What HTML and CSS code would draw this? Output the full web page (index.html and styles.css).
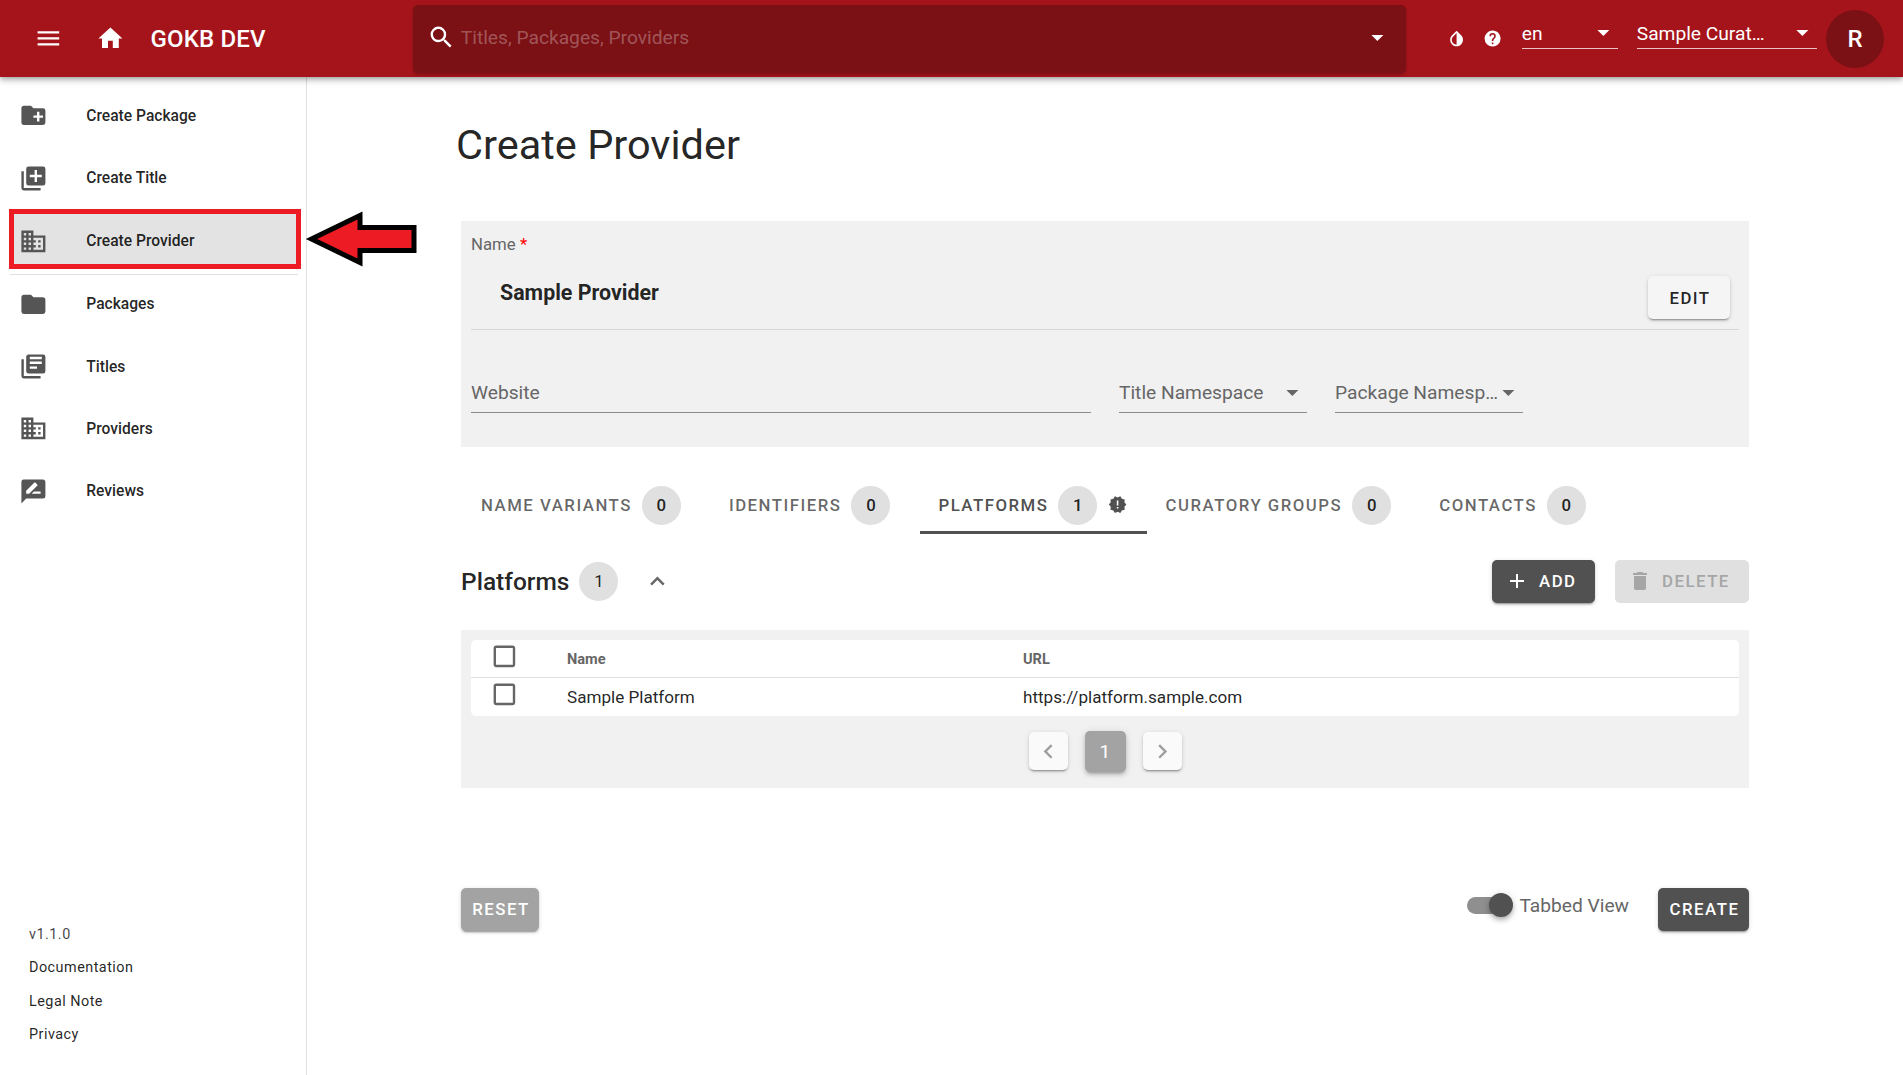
FILE: index.html
```html
<!DOCTYPE html>
<html lang="en">
<head>
<meta charset="utf-8">
<title>Create Provider</title>
<link rel="stylesheet" href="styles.css">
</head>
<body>
<div class="app">
  <header class="topbar">
    <div class="brand">
      <svg class="icon icon-menu" viewBox="0 0 24 24"><path d="M3,6H21V8H3V6M3,11H21V13H3V11M3,16H21V18H3V16Z"/></svg>
      <svg class="icon icon-home" viewBox="0 0 24 24"><path d="M10,20V14H14V20H19V12H22L12,3L2,12H5V20H10Z"/></svg>
      <span class="brand-title">GOKB DEV</span>
    </div>
    <div class="search">
      <svg class="icon" viewBox="0 0 24 24"><path d="M9.5,3A6.5,6.5 0 0,1 16,9.5C16,11.11 15.41,12.59 14.44,13.73L14.71,14H15.5L20.5,19L19,20.5L14,15.5V14.71L13.73,14.44C12.59,15.41 11.11,16 9.5,16A6.5,6.5 0 0,1 3,9.5A6.5,6.5 0 0,1 9.5,3M9.5,5C7,5 5,7 5,9.5C5,12 7,14 9.5,14C12,14 14,12 14,9.5C14,7 12,5 9.5,5Z"/></svg>
      <span class="search-text">Titles, Packages, Providers</span>
      <svg class="icon" viewBox="0 0 24 24"><path d="M7,10L12,15L17,10H7Z"/></svg>
    </div>
    <div class="tools">
      <svg class="icon-small icon-drop" viewBox="0 0 24 24"><path d="M12,19.58V19.58C10.4,19.58 8.89,18.96 7.76,17.83C6.62,16.69 6,15.19 6,13.58C6,12 6.62,10.47 7.76,9.34L12,5.1M17.66,7.93L12,2.27V2.27L6.34,7.93C3.22,11.05 3.22,16.12 6.34,19.24C7.9,20.8 9.95,21.58 12,21.58C14.05,21.58 16.1,20.8 17.66,19.24C20.78,16.12 20.78,11.05 17.66,7.93Z"/></svg>
      <svg class="icon-small icon-help" viewBox="0 0 24 24"><path d="M15.07,11.25L14.17,12.17C13.45,12.89 13,13.5 13,15H11V14.5C11,13.39 11.45,12.39 12.17,11.67L13.41,10.41C13.78,10.05 14,9.55 14,9C14,7.89 13.1,7 12,7A2,2 0 0,0 10,9H8A4,4 0 0,1 12,5A4,4 0 0,1 16,9C16,9.88 15.64,10.67 15.07,11.25M13,19H11V17H13M12,2A10,10 0 0,0 2,12A10,10 0 0,0 12,22A10,10 0 0,0 22,12C22,6.47 17.5,2 12,2Z"/></svg>
      <div class="top-select top-select-lang">
        <span>en</span>
        <svg class="icon" viewBox="0 0 24 24"><path d="M7,10L12,15L17,10H7Z"/></svg>
      </div>
      <div class="top-select top-select-group">
        <span>Sample Curat…</span>
        <svg class="icon" viewBox="0 0 24 24"><path d="M7,10L12,15L17,10H7Z"/></svg>
      </div>
      <div class="avatar">R</div>
    </div>
  </header>

  <div class="body-row">
    <aside class="sidebar">
      <nav class="nav">
        <a class="nav-item">
          <svg class="icon" viewBox="0 0 24 24"><path d="M10,4L12,6H20A2,2 0 0,1 22,8V18A2,2 0 0,1 20,20H4C2.89,20 2,19.1 2,18V6C2,4.89 2.89,4 4,4H10M15,9V12H12V14H15V17H17V14H20V12H17V9H15Z"/></svg>
          <span>Create Package</span>
        </a>
        <a class="nav-item">
          <svg class="icon" viewBox="0 0 24 24"><path d="M19,11H15V15H13V11H9V9H13V5H15V9H19M20,2H8A2,2 0 0,0 6,4V16A2,2 0 0,0 8,18H20A2,2 0 0,0 22,16V4A2,2 0 0,0 20,2M4,6H2V20A2,2 0 0,0 4,22H18V20H4V6Z"/></svg>
          <span>Create Title</span>
        </a>
        <a class="nav-item nav-item-active">
          <svg class="icon" viewBox="0 0 24 24"><path d="M18,15H16V17H18M18,11H16V13H18M20,19H12V17H14V15H12V13H14V11H12V9H20M10,7H8V5H10M10,11H8V9H10M10,15H8V13H10M10,19H8V17H10M6,7H4V5H6M6,11H4V9H6M6,15H4V13H6M6,19H4V17H6M12,7V3H2V21H22V7H12Z"/></svg>
          <span>Create Provider</span>
        </a>
        <div class="nav-divider"></div>
        <a class="nav-item">
          <svg class="icon" viewBox="0 0 24 24"><path d="M10,4H4C2.89,4 2,4.89 2,6V18A2,2 0 0,0 4,20H20A2,2 0 0,0 22,18V8C22,6.89 21.1,6 20,6H12L10,4Z"/></svg>
          <span>Packages</span>
        </a>
        <a class="nav-item">
          <svg class="icon" viewBox="0 0 24 24"><path d="M4,6H2V20A2,2 0 0,0 4,22H18V20H4V6M20,2H8A2,2 0 0,0 6,4V16A2,2 0 0,0 8,18H20A2,2 0 0,0 22,16V4A2,2 0 0,0 20,2M15,14H9V12H15V14M19,10H9V8H19V10M19,6H9V4H19V6Z"/></svg>
          <span>Titles</span>
        </a>
        <a class="nav-item">
          <svg class="icon" viewBox="0 0 24 24"><path d="M18,15H16V17H18M18,11H16V13H18M20,19H12V17H14V15H12V13H14V11H12V9H20M10,7H8V5H10M10,11H8V9H10M10,15H8V13H10M10,19H8V17H10M6,7H4V5H6M6,11H4V9H6M6,15H4V13H6M6,19H4V17H6M12,7V3H2V21H22V7H12Z"/></svg>
          <span>Providers</span>
        </a>
        <a class="nav-item">
          <svg class="icon" viewBox="0 0 24 24"><path d="M18,14H10.5L12.5,12H18M6,14V11.5L12.88,4.64C13.07,4.45 13.39,4.45 13.59,4.64L15.35,6.41C15.55,6.61 15.55,6.92 15.35,7.12L8.47,14M20,2H4A2,2 0 0,0 2,4V22L6,18H20A2,2 0 0,0 22,16V4C22,2.89 21.1,2 20,2Z"/></svg>
          <span>Reviews</span>
        </a>
      </nav>
      <div class="side-footer">
        <div class="side-version">v1.1.0</div>
        <div>Documentation</div>
        <div>Legal Note</div>
        <div>Privacy</div>
      </div>
    </aside>

    <main class="main">
      <h1 class="page-title">Create Provider</h1>

      <section class="form-panel">
        <div class="name-field">
          <div class="name-label">Name <span class="required">*</span></div>
          <div class="name-row">
            <div class="name-value">Sample Provider</div>
            <button class="btn btn-light">EDIT</button>
          </div>
        </div>
        <div class="field-row">
          <div class="field field-website">Website</div>
          <div class="field field-select">
            <span>Title Namespace</span>
            <svg class="icon" viewBox="0 0 24 24"><path d="M7,10L12,15L17,10H7Z"/></svg>
          </div>
          <div class="field field-select field-package">
            <span>Package Namesp…</span>
            <svg class="icon" viewBox="0 0 24 24"><path d="M7,10L12,15L17,10H7Z"/></svg>
          </div>
        </div>
      </section>

      <div class="tabs">
        <div class="tab">NAME VARIANTS <span class="chip">0</span></div>
        <div class="tab">IDENTIFIERS <span class="chip">0</span></div>
        <div class="tab tab-active">PLATFORMS <span class="chip">1</span>
          <svg class="icon-small icon-alert" viewBox="0 0 24 24"><path d="M23,12L20.56,9.22L20.9,5.54L17.29,4.72L15.4,1.54L12,3L8.6,1.54L6.71,4.72L3.1,5.53L3.44,9.21L1,12L3.44,14.78L3.1,18.47L6.71,19.29L8.6,22.47L12,21L15.4,22.46L17.29,19.28L20.9,18.46L20.56,14.78L23,12M13,17H11V15H13V17M13,13H11V7H13V13Z"/></svg>
        </div>
        <div class="tab">CURATORY GROUPS <span class="chip">0</span></div>
        <div class="tab">CONTACTS <span class="chip">0</span></div>
      </div>

      <div class="section-head">
        <h2 class="section-title">Platforms</h2>
        <span class="chip chip-plain">1</span>
        <svg class="icon icon-chevron" viewBox="0 0 24 24"><path d="M7.41,15.41L12,10.83L16.59,15.41L18,14L12,8L6,14L7.41,15.41Z"/></svg>
        <button class="btn btn-dark btn-add">
          <svg class="icon-btn" viewBox="0 0 24 24"><path d="M19,13H13V19H11V13H5V11H11V5H13V11H19V13Z"/></svg>
          ADD
        </button>
        <button class="btn btn-disabled btn-delete">
          <svg class="icon-btn" viewBox="0 0 24 24"><path d="M19,4H15.5L14.5,3H9.5L8.5,4H5V6H19M6,19A2,2 0 0,0 8,21H16A2,2 0 0,0 18,19V7H6V19Z"/></svg>
          DELETE
        </button>
      </div>

      <section class="table-panel">
        <table class="data-table">
          <colgroup>
            <col class="col-check"><col class="col-name"><col>
          </colgroup>
          <thead>
            <tr>
              <th><svg class="icon check" viewBox="0 0 24 24"><path d="M19,3H5C3.89,3 3,3.89 3,5V19A2,2 0 0,0 5,21H19A2,2 0 0,0 21,19V5C21,3.89 20.1,3 19,3M19,5V19H5V5H19Z"/></svg></th>
              <th>Name</th>
              <th>URL</th>
            </tr>
          </thead>
          <tbody>
            <tr>
              <td><svg class="icon check check-row" viewBox="0 0 24 24"><path d="M19,3H5C3.89,3 3,3.89 3,5V19A2,2 0 0,0 5,21H19A2,2 0 0,0 21,19V5C21,3.89 20.1,3 19,3M19,5V19H5V5H19Z"/></svg></td>
              <td>Sample Platform</td>
              <td>https://platform.sample.com</td>
            </tr>
          </tbody>
        </table>
        <div class="pagination">
          <span class="page-nav"><svg class="icon" viewBox="0 0 24 24"><path d="M15.41,16.58L10.83,12L15.41,7.41L14,6L8,12L14,18L15.41,16.58Z"/></svg></span>
          <span class="page-current">1</span>
          <span class="page-nav"><svg class="icon" viewBox="0 0 24 24"><path d="M8.59,16.58L13.17,12L8.59,7.41L10,6L16,12L10,18L8.59,16.58Z"/></svg></span>
        </div>
      </section>

      <div class="form-actions">
        <button class="btn btn-reset">RESET</button>
        <div class="switch"><span class="switch-track"></span><span class="switch-thumb"></span></div>
        <span class="switch-label">Tabbed View</span>
        <button class="btn btn-dark btn-create">CREATE</button>
      </div>
    </main>
  </div>

  <svg class="callout-arrow" viewBox="300 205 125 70"><polygon points="311.5,239 360,215.5 360,227.5 414,227.5 414,250.5 360,250.5 360,262.5"/></svg>
</div>
</body>
</html>
```

FILE: styles.css
```css
* { box-sizing: border-box; }
html, body { margin: 0; padding: 0; background: #fff; }
body {
  font-family: Roboto, "Liberation Sans", sans-serif;
  color: rgba(0, 0, 0, .87);
}
h1, h2 { margin: 0; }
button { font-family: inherit; border: 0; padding: 0; }

.app {
  position: relative;
  width: 1903px;
  height: 1075px;
  overflow: hidden;
  display: flex;
  flex-direction: column;
}
.icon { width: 28.8px; height: 28.8px; flex: none; fill: currentColor; display: block; }
.icon-small { width: 19.2px; height: 19.2px; flex: none; fill: currentColor; display: block; }
.icon-btn { width: 24px; height: 24px; flex: none; fill: currentColor; display: block; }

/* Top bar */
.topbar {
  height: 77px;
  flex: none;
  display: flex;
  align-items: center;
  background: #a5141b;
  color: #fff;
  position: relative;
  z-index: 2;
  box-shadow: 0 2px 4px -1px rgba(0,0,0,.2), 0 4px 5px 0 rgba(0,0,0,.14), 0 1px 10px 0 rgba(0,0,0,.12);
}
.brand { width: 413px; flex: none; display: flex; align-items: center; padding-left: 34px; }
.icon-home { margin-left: 33px; }
.brand-title { margin-left: 26px; padding-top: 1.5px; font-size: 24px; font-weight: 500; letter-spacing: .15px; }
.search {
  width: 993px;
  height: 68px;
  flex: none;
  display: flex;
  align-items: center;
  padding: 0 14px 2px 14px;
  background: #7b1015;
  border-radius: 5px;
  box-shadow: 0 2px 3px rgba(0,0,0,.2);
}
.search-text { flex: 1; margin-left: 5px; font-size: 19.2px; color: rgba(255,255,255,.3); }
.tools { flex: 1; display: flex; align-items: center; padding-left: 41px; }
.icon-drop { margin-right: 17px; }
.icon-help { margin-right: 19.4px; }
.top-select {
  align-self: flex-start;
  margin-top: 9.5px;
  height: 30px;
  display: flex;
  align-items: flex-start;
  justify-content: space-between;
  border-bottom: 1px solid rgba(255,255,255,.75);
  font-size: 19.2px;
  line-height: 29px;
}
.top-select .icon { margin-top: -1px; }
.top-select-lang { width: 96px; margin-right: 19px; }
.top-select-group { width: 180px; margin-right: 9.2px; }
.avatar {
  width: 58px;
  height: 58px;
  flex: none;
  border-radius: 50%;
  background: #7b1015;
  display: flex;
  align-items: center;
  justify-content: center;
  font-size: 24px;
  font-weight: 500;
}

/* Sidebar */
.body-row { flex: 1; display: flex; min-height: 0; }
.sidebar {
  width: 307px;
  flex: none;
  display: flex;
  flex-direction: column;
  border-right: 1px solid #e0e0e0;
}
.nav { padding: 7.7px 0 0 10px; }
.nav-item {
  height: 62.3px;
  width: 290px;
  padding-left: 9px;
  display: flex;
  align-items: center;
  font-size: 15.6px;
  font-weight: 500;
}
.nav-item .icon { color: #555; margin-right: 38.5px; }
.nav-item-active {
  width: 292px;
  height: 60px;
  margin-left: -1px;
  padding: 4px 0 0 5px;
  background: #e3e3e3;
  border: 5px solid #ed1c24;
}
.nav-divider { width: 288px; height: 1px; margin: 5px 0 -2.2px; background: #e0e0e0; }
.side-footer {
  margin-top: auto;
  padding: 0 0 23.6px 29px;
  font-size: 14.4px;
  line-height: 33.4px;
  letter-spacing: .48px;
}
.side-version { color: rgba(0,0,0,.75); }

/* Main */
.main { flex: 1; min-width: 0; padding: 0 154px; }
.page-title {
  margin: 44px 0 52px -5px;
  font-size: 41.5px;
  font-weight: 400;
  line-height: 48px;
}
.form-panel { background: #f1f1f1; height: 226px; padding: 12px 10px 0; }
.name-field { height: 97px; border-bottom: 1px solid #d6d6d6; }
.name-label { height: 22px; margin-bottom: 21px; font-size: 16.8px; line-height: 22px; color: #666; }
.required { color: #f00; }
.name-row { display: flex; justify-content: space-between; padding-right: 9px; }
.name-value { padding: 1px 0 0 29px; font-size: 21.4px; font-weight: 700; line-height: 32px; }
.field-row { display: flex; gap: 28px; margin-top: 39px; }
.field {
  height: 44px;
  padding-top: 3px;
  display: flex;
  align-items: center;
  border-bottom: 1px solid #8a8a8a;
  font-size: 19.2px;
  color: #666;
}
.field-website { width: 620px; }
.field-select { width: 188px; justify-content: space-between; }
.field-package .icon { margin-left: -6px; }
.field-select .icon { color: #666; }

/* Buttons */
.btn {
  height: 43px;
  display: inline-flex;
  align-items: center;
  justify-content: center;
  flex: none;
  border-radius: 5px;
  font-size: 16.8px;
  font-weight: 500;
  letter-spacing: 1.5px;
  box-shadow: 0 3px 1px -2px rgba(0,0,0,.2), 0 2px 2px 0 rgba(0,0,0,.14), 0 1px 5px 0 rgba(0,0,0,.12);
}
.btn-light { width: 82px; padding-left: 2px; background: #f5f5f5; color: rgba(0,0,0,.87); }
.btn-dark { background: #515151; color: #fff; }
.btn-disabled { background: #e0e0e0; color: #a6a6a6; box-shadow: none; }
.btn-reset { width: 78px; padding: 0 0 2px 2px; background: #a3a3a3; color: #fff; }
.btn-add { width: 103px; margin-left: auto; padding-left: 13px; gap: 10px; justify-content: flex-start; }
.btn-delete { width: 134px; margin-left: 20px; padding-left: 13px; gap: 10px; justify-content: flex-start; }
.btn-create { width: 91px; margin-left: 29px; padding: 0 0 2px 2px; }

/* Tabs */
.tabs { display: flex; margin-top: 29px; height: 58px; padding-left: 1px; }
.tab {
  display: flex;
  align-items: center;
  height: 58px;
  padding: 0 9px 0 19px;
  font-size: 16.8px;
  font-weight: 500;
  letter-spacing: 1.5px;
  color: rgba(0,0,0,.6);
  white-space: nowrap;
}
.tab + .tab { margin-left: 10px; }
.tab + .tab-active { margin-left: 11px; }
.tab-active { color: #515151; border-bottom: 3px solid #515151; padding: 3px 19px 0 18px; }
.tab-active + .tab { margin-left: 0; }
.chip {
  width: 39px;
  height: 39px;
  margin: 0 10px 0 10px;
  flex: none;
  border-radius: 50%;
  background: #e0e0e0;
  display: flex;
  align-items: center;
  justify-content: center;
  color: rgba(0,0,0,.87);
  letter-spacing: 0;
  font-size: 16.8px;
}
.icon-alert { color: #515151; margin-left: 1px; }

/* Section */
.section-head { display: flex; align-items: center; height: 44px; margin-top: 25px; }
.section-title { font-size: 24.5px; font-weight: 500; line-height: 32px; padding-top: 1px; }
.chip-plain { margin: 0 0 0 10px; font-weight: 400; }
.icon-chevron { margin-left: 24.5px; color: #666; }

.table-panel { margin-top: 27px; height: 158px; background: #f1f1f1; padding: 10px 10px 0; }
.data-table {
  width: 100%;
  table-layout: fixed;
  border-collapse: separate;
  border-spacing: 0;
  background: #fff;
  border-radius: 5px;
}
.col-check { width: 96px; }
.col-name { width: 456px; }
.data-table th {
  height: 38px;
  padding: 0;
  text-align: left;
  font-size: 14.6px;
  font-weight: 700;
  color: #666;
  border-bottom: 1px solid #e0e0e0;
}
.data-table td { height: 38px; padding: 0; font-size: 17.1px; }
.check { color: #666; margin: 0 0 4px 19px; }
.check-row { margin-bottom: 6px; }

.pagination { height: 70px; display: flex; align-items: center; justify-content: center; gap: 17px; }
.page-nav {
  width: 39px;
  height: 38px;
  display: flex;
  align-items: center;
  justify-content: center;
  background: #fafafa;
  color: #9e9e9e;
  border-radius: 5px;
  box-shadow: 0 3px 1px -2px rgba(0,0,0,.2), 0 2px 2px 0 rgba(0,0,0,.14), 0 1px 5px 0 rgba(0,0,0,.12);
}
.page-current {
  width: 41px;
  height: 41px;
  display: flex;
  align-items: center;
  justify-content: center;
  background: #a3a3a3;
  color: #fff;
  font-size: 19.2px;
  border-radius: 5px;
  box-shadow: 0 3px 3px -2px rgba(0,0,0,.2), 0 3px 4px 0 rgba(0,0,0,.14), 0 1px 8px 0 rgba(0,0,0,.12);
}

/* Form actions */
.form-actions { display: flex; align-items: center; margin-top: 100px; height: 43px; }
.btn-reset { margin-right: auto; }
.switch { position: relative; width: 46px; height: 29px; margin-bottom: 9px; flex: none; }
.switch-track {
  position: absolute;
  left: 2px;
  top: 6px;
  width: 44px;
  height: 17px;
  border-radius: 9px;
  background: #8f8f8f;
}
.switch-thumb {
  position: absolute;
  left: 24px;
  top: 2px;
  width: 24px;
  height: 24px;
  border-radius: 50%;
  background: #515151;
  box-shadow: 0 2px 4px -1px rgba(0,0,0,.2), 0 4px 5px 0 rgba(0,0,0,.14), 0 1px 10px 0 rgba(0,0,0,.12);
}
.switch-label { margin: 0 0 9px 8px; font-size: 19.2px; color: #666; }

/* Annotation over the screenshot */
.callout-arrow {
  position: absolute;
  left: 300px;
  top: 205px;
  width: 125px;
  height: 70px;
  z-index: 3;
  fill: #ed1c24;
  stroke: #000;
  stroke-width: 5;
  stroke-linejoin: miter;
}
```
